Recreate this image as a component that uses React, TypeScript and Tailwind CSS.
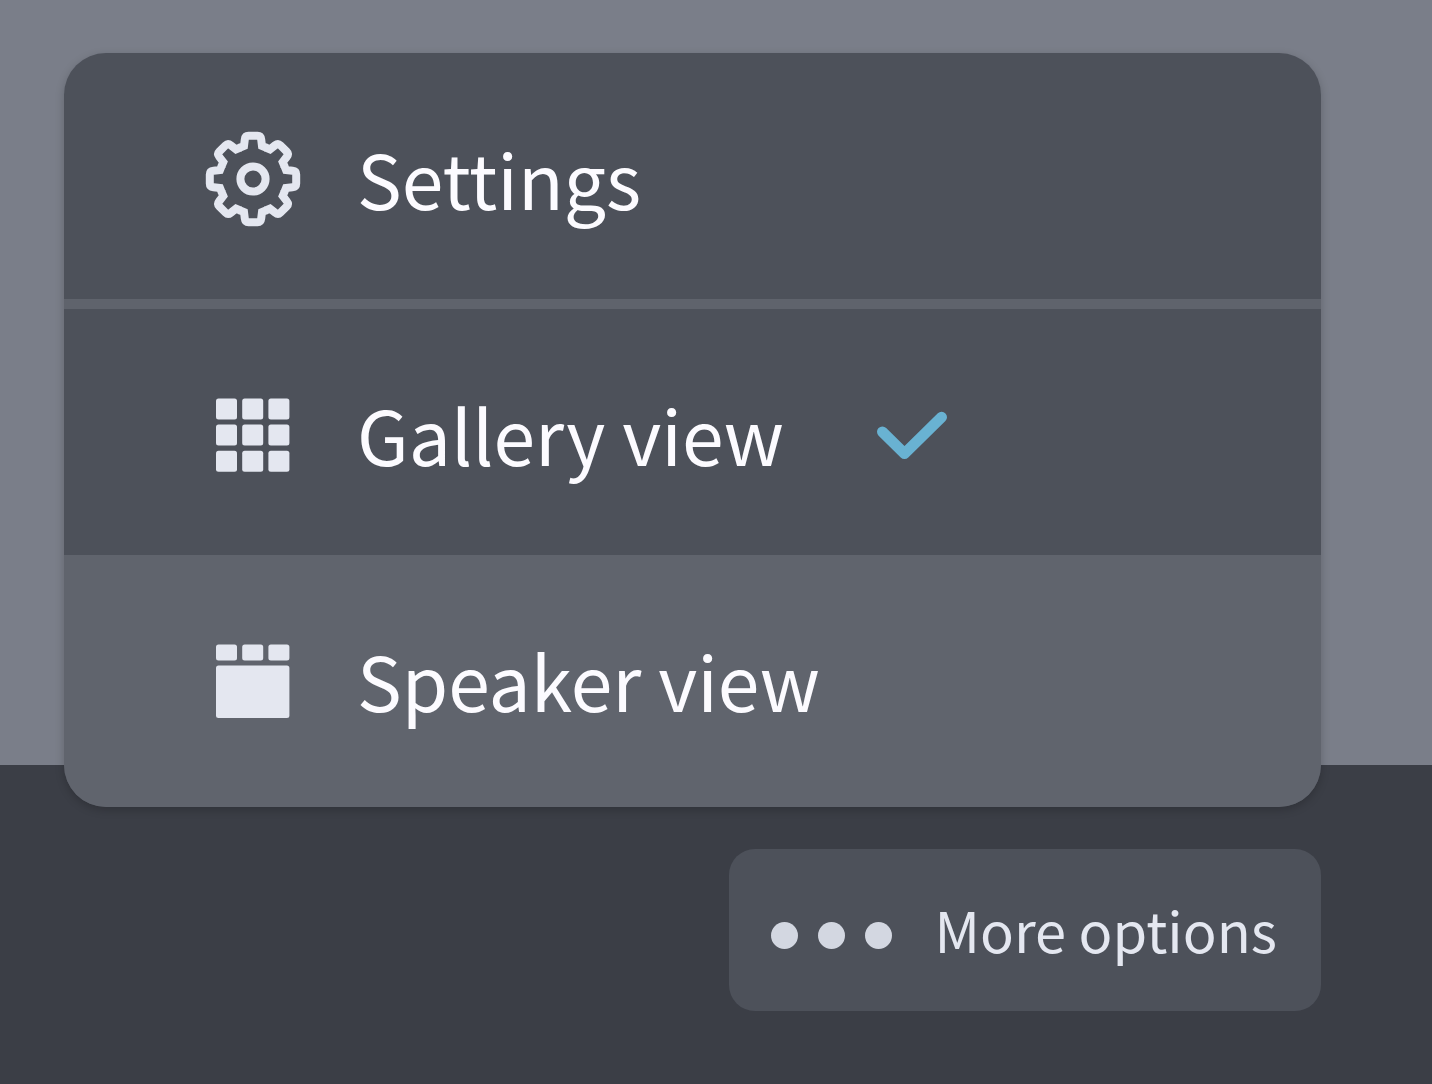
import type { ReactNode } from "react";
import clsx from "clsx";

const TEETH = [0, 45, 90, 135, 180, 225, 270, 315];

function GearIcon() {
  return (
    <svg className="size-24 shrink-0" viewBox="-48 -48 96 96" fill="none" stroke="currentColor" strokeWidth={8} aria-hidden="true">
      {TEETH.map((angle) => (
        <path
          key={angle}
          transform={`rotate(${angle})`}
          d="M-13.4 -31.2L-9 -33L-8.2 -39.5Q-7.8 -43.2 -4.5 -43.2H4.5Q7.8 -43.2 8.2 -39.5L9 -33L13.4 -31.2"
        />
      ))}
      <circle r={12.6} />
    </svg>
  );
}

function GalleryIcon() {
  return (
    <svg className="size-24 shrink-0" viewBox="0 0 96 96" fill="currentColor" aria-hidden="true">
      {[11.4, 37.6, 63.8].map((y) =>
        [11, 37.2, 63.4].map((x) => <rect key={`${x}-${y}`} x={x} y={y} width={21} height={21} rx={2.5} />)
      )}
    </svg>
  );
}

function SpeakerIcon() {
  return (
    <svg className="size-24 shrink-0" viewBox="0 0 96 96" fill="currentColor" aria-hidden="true">
      {[11, 37.2, 63.4].map((x) => (
        <rect key={x} x={x} y={11.4} width={21} height={16} rx={2.5} />
      ))}
      <rect x={11} y={32.6} width={73.4} height={52.3} rx={2.5} />
    </svg>
  );
}

function CheckIcon() {
  return (
    <svg
      className="ml-[93px] h-12 w-[70px] shrink-0 text-[#69b2d2]"
      viewBox="0 0 70 48"
      fill="none"
      stroke="currentColor"
      strokeWidth={10.8}
      strokeLinecap="round"
      strokeLinejoin="round"
      aria-hidden="true"
    >
      <path d="M5.4 20.8L27.5 42.6L64.6 6.2" />
    </svg>
  );
}

type MenuItemProps = {
  icon: ReactNode;
  label: string;
  checked?: boolean;
  highlighted?: boolean;
};

function MenuItem({ icon, label, checked, highlighted }: MenuItemProps) {
  return (
    <button
      type="button"
      role={checked === undefined ? "menuitem" : "menuitemradio"}
      aria-checked={checked}
      className={clsx(
        "flex w-full items-center pt-[78px] pl-[141px] text-left hover:bg-[#60646d]",
        highlighted ? "bg-[#60646d] pb-[78px]" : "pb-[72px]"
      )}
    >
      <span className="flex text-[#e4e7f0]">{icon}</span>
      <span className="ml-14 pb-0.5 text-[75px] leading-[90px] whitespace-nowrap text-[#fcfbff]">{label}</span>
      {checked && <CheckIcon />}
    </button>
  );
}

export default function App() {
  return (
    <div className="flex min-h-screen flex-col bg-[#3b3e46] font-['Noto_Sans_CJK_SC',sans-serif]">
      {/* Video area, the menu hangs over the toolbar below */}
      <main className="flex flex-col bg-[#7a7e89] pt-[53px] pr-[111px] pl-16">
        <div
          role="menu"
          aria-label="More options"
          className="relative -mb-[42px] overflow-hidden rounded-[42px] bg-[#4d515a] shadow-[0_3px_10px_rgba(0,0,0,0.2)]"
        >
          <MenuItem icon={<GearIcon />} label="Settings" />
          <div role="separator" className="h-[10px] bg-[#5f636c]" />
          <MenuItem icon={<GalleryIcon />} label="Gallery view" checked />
          <MenuItem icon={<SpeakerIcon />} label="Speaker view" checked={false} highlighted />
        </div>
      </main>

      <footer className="flex justify-end pt-[84px] pr-[111px] pb-[73px] pl-16">
        <button
          type="button"
          aria-haspopup="menu"
          aria-expanded="true"
          className="flex items-center rounded-[26px] bg-[#4d515a] pt-[46px] pr-11 pb-9 pl-[42px]"
        >
          <span className="flex gap-5" aria-hidden="true">
            <span className="size-[27px] rounded-full bg-[#d3d7e1]" />
            <span className="size-[27px] rounded-full bg-[#d3d7e1]" />
            <span className="size-[27px] rounded-full bg-[#d3d7e1]" />
          </span>
          <span className="ml-[43px] pb-3 text-[56px] leading-[68px] whitespace-nowrap text-[#e4e7f0]">More options</span>
        </button>
      </footer>
    </div>
  );
}
